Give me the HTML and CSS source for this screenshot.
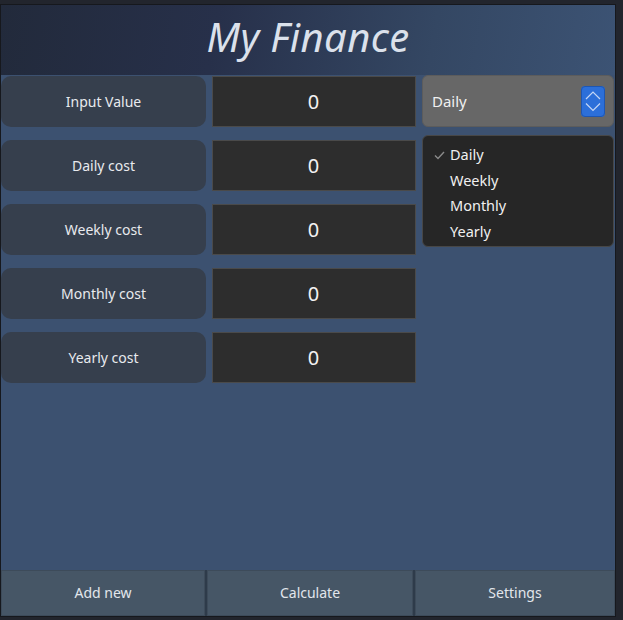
FILE: index.html
```html
<!DOCTYPE html>
<html>
<head>
<meta charset="utf-8">
<link rel="stylesheet" href="styles.css">
</head>
<body>
<div class="window">
  <header class="header"><h1 class="title">My Finance</h1></header>
  <main class="main">
    <div class="label">Input Value</div>
    <div class="value">0</div>
    <div class="combo">
      <span>Daily</span>
      <svg class="spin" width="24" height="31" viewBox="0 0 24 31">
        <rect x="0" y="0" width="24" height="31" rx="4" fill="#2c6fd9"/>
        <rect x="0.5" y="0.5" width="23" height="30" rx="3.5" fill="none" stroke="#1d56b3"/>
        <path d="M5 13 L12 6 L19 13" fill="none" stroke="#c4d6f5" stroke-width="1.2"/>
        <path d="M5 17.5 L12 24.5 L19 17.5" fill="none" stroke="#c4d6f5" stroke-width="1.2"/>
      </svg>
    </div>
    <div class="label">Daily cost</div>
    <div class="value">0</div>
    <div class="empty"></div>
    <div class="label">Weekly cost</div>
    <div class="value">0</div>
    <div class="empty"></div>
    <div class="label">Monthly cost</div>
    <div class="value">0</div>
    <div class="empty"></div>
    <div class="label">Yearly cost</div>
    <div class="value">0</div>
    <div class="empty"></div>
  </main>
  <footer class="footer">
    <div class="btn">Add new</div>
    <div class="btn">Calculate</div>
    <div class="btn">Settings</div>
  </footer>
  <ul class="menu">
    <li class="item checked"><svg class="check" width="11" height="9" viewBox="0 0 11 9"><path d="M1 4.5 L4 7.5 L10 1" fill="none" stroke="#8a8a8a" stroke-width="1.4"/></svg>Daily</li>
    <li class="item">Weekly</li>
    <li class="item">Monthly</li>
    <li class="item">Yearly</li>
  </ul>
</div>
</body>
</html>
```

FILE: styles.css
```css
html, body {
  margin: 0;
  padding: 0;
  background: #22252d;
  width: 623px;
  height: 620px;
  overflow: hidden;
  font-family: "Noto Sans", "Open Sans", sans-serif;
}
body {
  padding-top: 4px;
  box-sizing: border-box;
}
.window {
  position: relative;
  width: 614px;
  height: 611px;
  border: 1px solid #16181d;
  background: #3c5170;
  display: flex;
  flex-direction: column;
}
.header {
  height: 70px;
  box-sizing: border-box;
  padding-bottom: 8px;
  background: linear-gradient(100deg, #222a3b 0%, #27304a 35%, #344763 70%, #3c5374 100%);
  display: flex;
  align-items: center;
  justify-content: center;
}
.title {
  margin: 0;
  font-family: "Noto Sans", "Open Sans", sans-serif;
  font-style: italic;
  font-weight: 400;
  font-size: 40px;
  color: #dbe1eb;
  letter-spacing: 0.4px;
}
.main {
  flex: 1;
  display: grid;
  grid-template-columns: 205px 203px 193px;
  grid-auto-rows: 51px;
  column-gap: 6px;
  row-gap: 13px;
  padding-top: 1px;
  align-content: start;
}
.main > .value { margin-right: -1px; padding-right: 1px; }
.label {
  background: #363f4d;
  border-radius: 10px;
  color: #e8eaee;
  font-size: 14px;
  display: flex;
  align-items: center;
  justify-content: center;
}
.value {
  background: #2d2d2d;
  border: 1px solid #4a4a4a;
  color: #f2f2f2;
  font-size: 20px;
  display: flex;
  align-items: center;
  justify-content: center;
  box-sizing: border-box;
}
.combo {
  margin-left: 1px;
  margin-top: -1px;
  height: 52px;
  background: #676767;
  border: 1px solid #5c5c5c;
  border-radius: 6px;
  box-sizing: border-box;
  display: flex;
  align-items: center;
  justify-content: space-between;
  padding: 0 8px 0 9px;
  color: #f0f0f0;
  font-size: 15px;
}
.spin { display: block; margin-top: 1px; }
.footer {
  height: 46px;
  display: flex;
  gap: 2px;
  background: #2e3b4a;
}
.btn {
  background: #465666;
  border: 1px solid #3d4b5a;
  color: #e2e6ec;
  font-size: 14px;
  display: flex;
  align-items: center;
  justify-content: center;
  box-sizing: border-box;
  padding-bottom: 2px;
}
.btn:first-child { flex: 0 0 204px; }
.btn:nth-child(2) { flex: 0 0 206px; }
.btn:last-child { flex: 1; }
.menu {
  position: absolute;
  left: 421px;
  top: 130px;
  width: 192px;
  height: 112px;
  box-sizing: border-box;
  margin: 0;
  padding: 6px 0 0 0;
  list-style: none;
  background: #262626;
  border: 1px solid #474747;
  border-radius: 6px;
}
.item {
  height: 25.6px;
  line-height: 25.6px;
  color: #f0f0f0;
  font-size: 14.5px;
  padding-left: 27px;
  position: relative;
}
.check {
  position: absolute;
  left: 11px;
  top: 9px;
}
```
